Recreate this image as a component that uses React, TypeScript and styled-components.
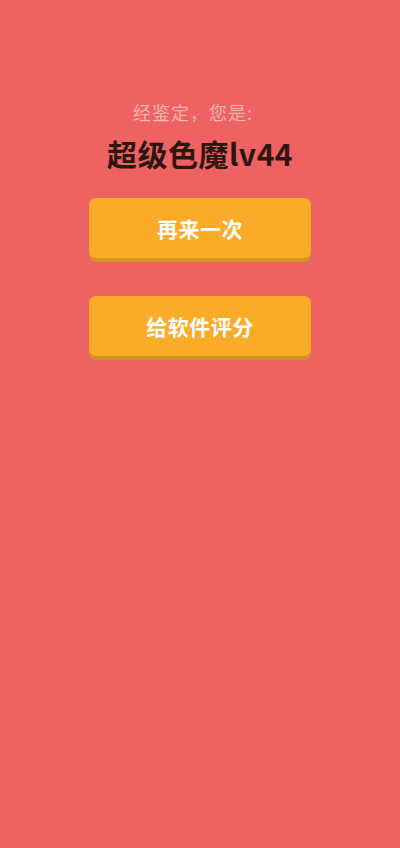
import React from 'react';
import styled, { createGlobalStyle } from 'styled-components';

const GlobalStyle = createGlobalStyle`
  html, body {
    margin: 0;
    padding: 0;
    background: #ef6262;
  }
  body {
    font-family: "Noto Sans CJK SC", "Noto Sans", sans-serif;
  }
`;

const Page = styled.main`
  min-height: 848px;
  background: #ef6262;
  display: flex;
  flex-direction: column;
  align-items: center;
  padding-top: 100px;
  box-sizing: border-box;
`;

const Verdict = styled.p`
  margin: 0 14px 0 0;
  font-size: 18px;
  line-height: 24px;
  color: #f9b4ae;
  letter-spacing: 1px;
`;

const Title = styled.h1`
  margin: 9px 0 0;
  font-size: 30px;
  line-height: 40px;
  font-weight: 700;
  color: #2b1610;
  letter-spacing: 0.5px;
`;

const Actions = styled.div`
  display: flex;
  flex-direction: column;
  gap: 38px;
  margin-top: 25px;
`;

const ActionButton = styled.button`
  width: 222px;
  height: 60px;
  border: none;
  border-radius: 7px;
  background: #fbab2a;
  box-shadow: 0 4px 0 #d29327;
  color: #fff;
  font-family: inherit;
  font-size: 21px;
  font-weight: 700;
  letter-spacing: 0.5px;
  padding: 0;
  cursor: pointer;
`;

export default function App() {
  return (
    <>
      <GlobalStyle />
      <Page>
        <Verdict>经鉴定，您是:</Verdict>
        <Title>超级色魔lv44</Title>
        <Actions>
          <ActionButton>再来一次</ActionButton>
          <ActionButton>给软件评分</ActionButton>
        </Actions>
      </Page>
    </>
  );
}
